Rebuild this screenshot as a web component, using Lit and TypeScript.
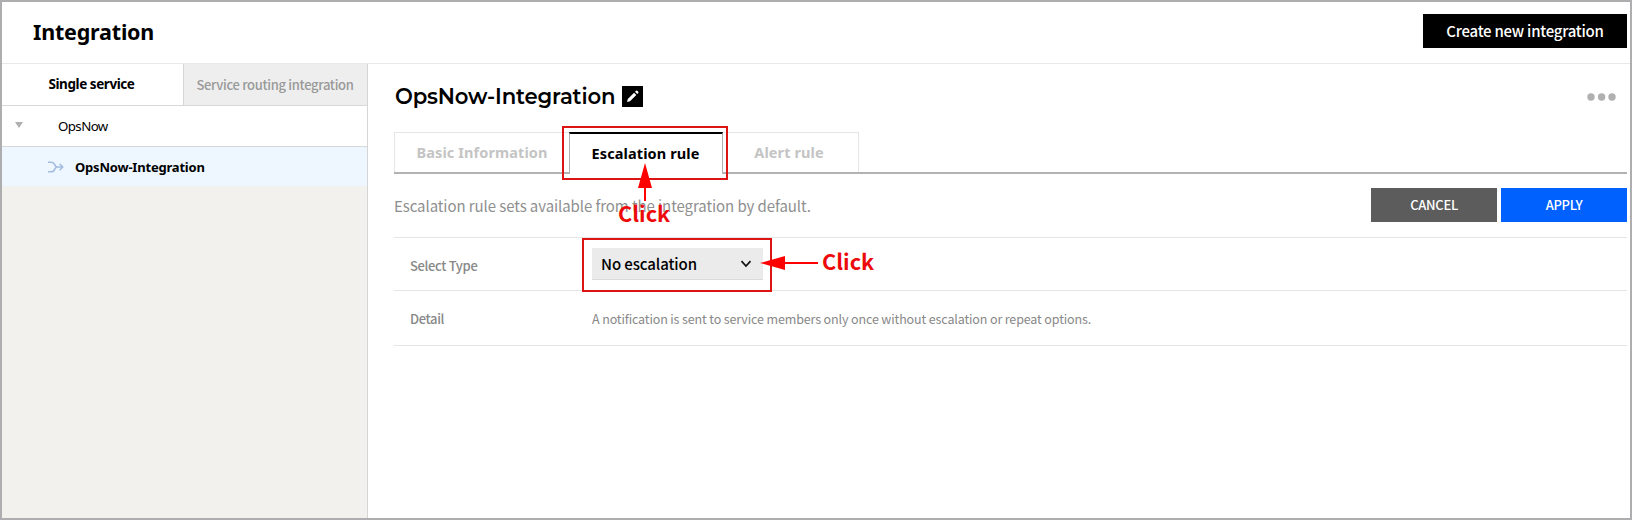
import { LitElement, html, css } from "lit";
import { customElement } from "lit/decorators.js";

@customElement("app-root")
class AppRoot extends LitElement {
  static styles = css`
    :host { display: block; }
    * { box-sizing: border-box; }
    .frame { position: relative; height: 520px; border: 2px solid #aeaeb0; background: #fff; display: flex; flex-direction: column; overflow: hidden; font-family: "Noto Sans CJK KR", "Noto Sans", sans-serif; white-space: nowrap; color: #000; }
    .noto { font-family: "Noto Sans", sans-serif; }
    .header { height: 62px; border-bottom: 1px solid #e8e8e8; display: flex; align-items: flex-start; justify-content: space-between; padding: 0 3px 0 31px; flex: none; }
    .h1 { font-size: 21.500px; letter-spacing: -0.2px; font-weight: 700; line-height: 30px; margin-top: 15px; }
    .create { background: #000; color: #fff; width: 204px; height: 34px; line-height: 34px; text-align: center; font-size: 15px; letter-spacing: -0.25px; font-weight: 500; margin-top: 12px; }
    .body { flex: 1; display: flex; min-height: 0; }
    .side { width: 366px; background: #f3f1ed; border-right: 1px solid #d5d5d5; }
    .stabs { display: flex; height: 42px; border-bottom: 1px solid #d8d8d8; background: #eee; font-size: 13px; letter-spacing: -0.32px; line-height: 41px; text-align: center; }
    .single { width: 182px; background: #fff; border-right: 1px solid #d5d5d5; font-weight: 700; font-size: 13.500px; letter-spacing: -0.43px; line-height: 41px; padding-right: 2px; }
    .routing { flex: 1; color: #999; font-weight: 500; padding-right: 1px; }
    .row { display: flex; align-items: center; font-size: 13.300px; letter-spacing: -0.6px; height: 41px; background: #fff; border-bottom: 1px solid #d8d8d8; padding-left: 13px; }
    .caret { width: 8px; height: 6px; margin: -2px 35px 0 0; flex: none; }
    .sel { height: 39px; background: #eef7ff; border: 0; padding-left: 46px; font-weight: 700; font-size: 13px; letter-spacing: -0.2px; }
    .flow { margin-right: 11px; flex: none; }
    .main { flex: 1; padding: 18px 3px 0 26px; }
    .titlebar { display: flex; align-items: center; height: 28px; }
    .title { font-family: Montserrat, Inter, sans-serif; font-weight: 600; font-size: 21.200px; letter-spacing: -0.15px; line-height: 28px; width: 228px; padding-left: 1px; margin-top: -1px; }
    .dots { margin: 1px 10px 0 auto; }
    .tabs { display: flex; height: 42px; margin-top: 22px; border-bottom: 2px solid #b2b2b2; font-size: 14.500px; letter-spacing: 0.1px; font-weight: 700; color: #c4c4c4; text-align: center; line-height: 40px; }
    .tab { border: 1px solid #e6e6e6; border-bottom: 0; height: 40px; line-height: 39px; }
    .t1 { width: 175px; border-right: 0; }
    .t2 { width: 154px; height: 42px; border: 1px solid #b2b2b2; border-top: 2px solid #000; border-bottom: 0; background: #fff; color: #000; line-height: 38px; padding-right: 1px; }
    .t3 { width: 136px; border-left: 0; padding-right: 3px; }
    .desc { display: flex; align-items: center; height: 64px; border-bottom: 1px solid #e5e5e5; gap: 4px; color: #8f8f8f; font-size: 15px; letter-spacing: -0.08px; }
    .dtext { margin-right: auto; }
    .btn { width: 126px; height: 34px; line-height: 34px; margin-top: -1px; text-align: center; color: #fff; font-size: 13px; letter-spacing: -0.3px; font-weight: 500; background: #5c5c5c; }
    .apply { background: #0061ff; }
    .field { display: flex; align-items: center; height: 53px; border-bottom: 1px solid #e5e5e5; color: #888; font-size: 13px; letter-spacing: -0.35px; padding-top: 2px; }
    .detail { height: 55px; padding-top: 0; }
    .note { font-size: 12.500px; letter-spacing: -0.13px; }
    .label { width: 198px; padding-left: 16px; font-weight: 500; }
    .select { width: 171px; height: 32px; background: #ebebeb; border-bottom: 1px solid #dadada; display: flex; align-items: center; justify-content: space-between; padding: 0 11px 0 9px; margin-top: -2px; color: #000; font-size: 15px; letter-spacing: -0.1px; font-weight: 500; }
    .mark { position: absolute; border: 2px solid #dc1414; }
    .m1 { left: 560px; top: 124px; width: 166px; height: 54px; }
    .m2 { left: 580px; top: 236px; width: 190px; height: 54px; }
    .arrow { position: absolute; fill: #f00; }
    .a1 { left: 636px; top: 161px; }
    .a2 { left: 758px; top: 254px; }
    .click { position: absolute; color: #ec0a0a; font-weight: 700; font-size: 21.700px; line-height: 30px; }
    .c1 { left: 616px; top: 196px; }
    .c2 { left: 820px; top: 244px; }
  `;
  render() {
    return html`<div class="frame">
      <div class="header"><div class="h1 noto">Integration</div><div class="create">Create new integration</div></div>
      <div class="body">
        <div class="side">
          <div class="stabs"><div class="single noto">Single service</div><div class="routing">Service routing integration</div></div>
          <div class="row noto"><svg class="caret" viewBox="0 0 8 6"><path d="M0 0h8L4 6z" fill="#b0b0b0"/></svg><span>OpsNow</span></div>
          <div class="row sel noto"><svg class="flow" width="16" height="12" viewBox="0 0 16 12" fill="none" stroke="#a3bde0" stroke-width="1.5"><path d="M0 1.200h3.200c2 0 3 1.200 3.600 2.700.5 1.300 1.200 2.100 2.600 2.100H15M0 10.800h3.200c2 0 3-1.200 3.600-2.700C7.300 6.800 8 6 9.400 6M11.600 2.800 14.800 6l-3.200 3.200"/></svg><span>OpsNow-Integration</span></div>
        </div>
        <div class="main">
          <div class="titlebar"><span class="title">OpsNow-Integration</span><svg class="pen" width="21" height="21"><rect width="21" height="21" fill="#000"/><path d="M5 16l.8-3 6.300-6.300 2.200 2.200L8 15.200zM13 5.800l1.100-1.100q.6-.4 1.100 0l1.100 1.100q.4.5 0 1.100L15.200 8z" fill="#fff"/></svg><svg class="dots" width="30" height="8" fill="#b0b0b0"><circle cx="4" cy="4" r="3.700"/><circle cx="14.600" cy="4" r="3.700"/><circle cx="25" cy="4" r="3.700"/></svg></div>
          <div class="tabs noto"><div class="tab t1">Basic Information</div><div class="tab t2">Escalation rule</div><div class="tab t3">Alert rule</div></div>
          <div class="desc"><span class="dtext">Escalation rule sets available from the integration by default.</span><div class="btn">CANCEL</div><div class="btn apply">APPLY</div></div>
          <div class="field"><div class="label">Select Type</div><div class="select"><span>No escalation</span><svg width="12" height="8" fill="none" stroke="#111" stroke-width="1.700"><path d="M1.500 1.200 6 6l4.500-4.800"/></svg></div></div>
          <div class="field detail"><div class="label">Detail</div><span class="note">A notification is sent to service members only once without escalation or repeat options.</span></div>
        </div>
      </div>
      <div class="mark m1"></div><div class="mark m2"></div>
      <div class="click c1">Click</div><div class="click c2">Click</div>
      <svg class="arrow a1" width="14" height="38"><path d="M7 0l7 25H8v13H6V25H0z"/></svg>
      <svg class="arrow a2" width="58" height="14"><path d="M0 7L25 0v6h33v2H25v6z"/></svg>
    </div>`;
  }
}
